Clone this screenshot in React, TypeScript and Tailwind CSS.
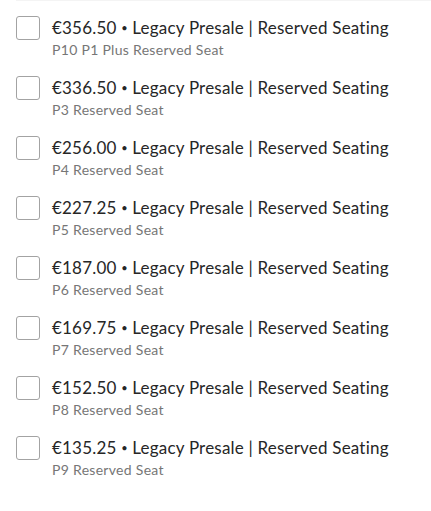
const rows = [
  { price: "€356.50", seat: "P10 P1 Plus Reserved Seat" },
  { price: "€336.50", seat: "P3 Reserved Seat" },
  { price: "€256.00", seat: "P4 Reserved Seat" },
  { price: "€227.25", seat: "P5 Reserved Seat" },
  { price: "€187.00", seat: "P6 Reserved Seat" },
  { price: "€169.75", seat: "P7 Reserved Seat" },
  { price: "€152.50", seat: "P8 Reserved Seat" },
  { price: "€135.25", seat: "P9 Reserved Seat" },
];

export default function App() {
  return (
    <main className="bg-white w-[431px] h-[511px] font-['Lato',sans-serif]">
      <div className="ml-4 border-t border-[#f4f4f4]" />
      <ul>
        {rows.map((r) => (
          <li key={r.seat} className="flex gap-3 pl-4 pt-[15px] h-[60px]">
            <span className="w-6 h-6 shrink-0 rounded-[3px] border border-[#a3a3a3] bg-white" />
            <div className="pt-[1px]">
              <div className="text-[17px] leading-[22px] tracking-[0.2px] text-[#262626]">
                {r.price} <span className="text-[11px] align-[2px]">•</span> Legacy Presale | Reserved Seating
              </div>
              <div className="text-[14px] leading-[21px] tracking-[0.3px] text-[#767676]">{r.seat}</div>
            </div>
          </li>
        ))}
      </ul>
    </main>
  );
}
